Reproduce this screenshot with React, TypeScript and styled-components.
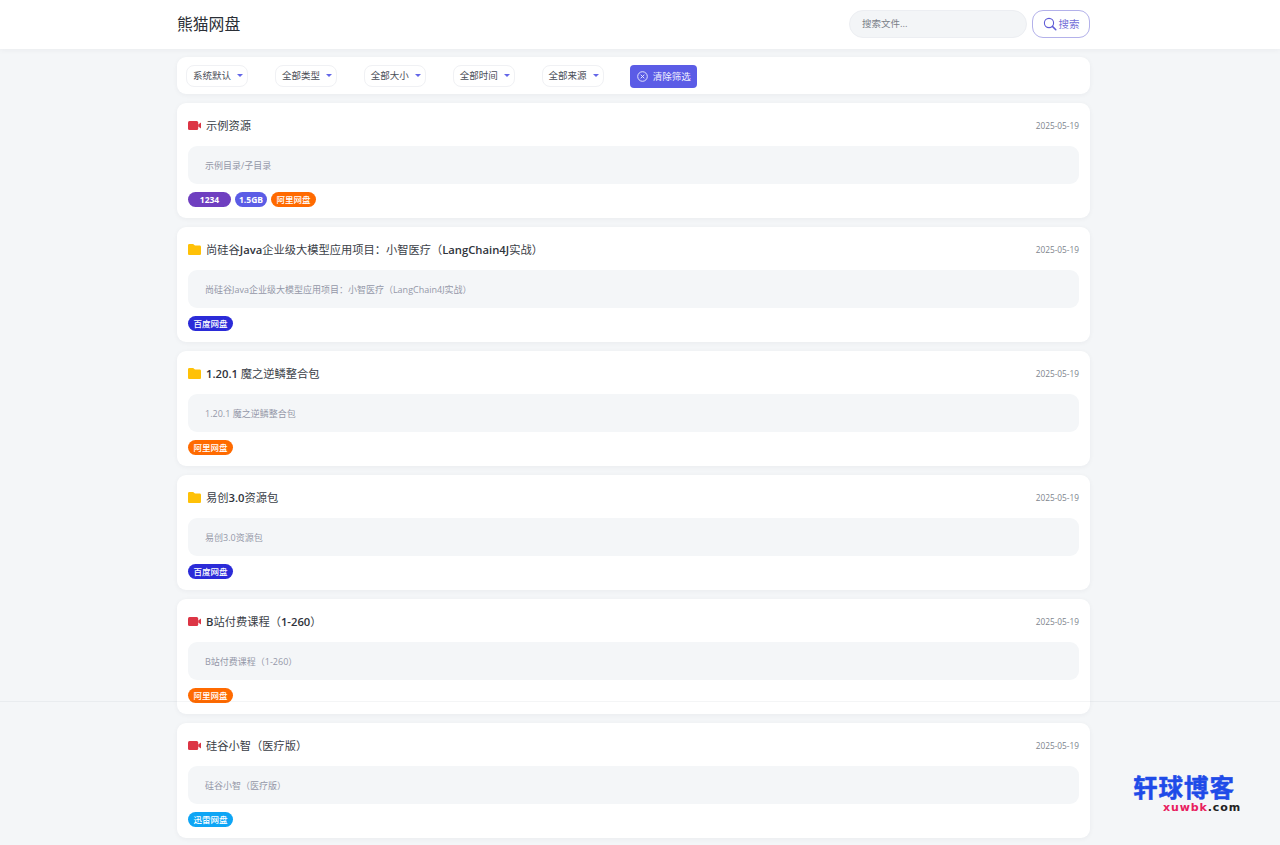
import { createGlobalStyle, styled } from "styled-components";

const FONT = `"Open Sans", "Noto Sans CJK SC", sans-serif`;

const GlobalStyle = createGlobalStyle`
    html, body {
        margin: 0;
        padding: 0;
        background: #f4f6f8;
        font-family: ${FONT};
        overflow: hidden;
    }
    * { box-sizing: border-box; }
`;

const Page = styled.div`
    position: relative;
    height: 845px;
    overflow: hidden;
`;

// the page keeps room for a hidden scrollbar, so everything centres a bit left
const Header = styled.header`
    height: 49px;
    background: #fff;
    box-shadow: 0 1px 6px rgba(30, 40, 60, 0.05);
    padding: 0 13px 2px 0;
    display: flex;
    justify-content: center;
`;

const HeaderInner = styled.div`
    width: 913px;
    display: flex;
    align-items: center;
    justify-content: space-between;
`;

const Logo = styled.div`
    font-size: 15.8px;
    font-weight: 400;
    color: #2b2f36;
`;

const SearchRow = styled.div`
    display: flex;
    align-items: center;
    gap: 5px;
`;

const SearchInput = styled.div`
    width: 178px;
    height: 28px;
    border-radius: 14px;
    background: #f3f5f7;
    border: 1px solid #eceef2;
    padding: 0 0 1px 12px;
    display: flex;
    align-items: center;
    font-size: 9.5px;
    color: #7a7f88;
`;

const SearchButton = styled.div`
    width: 58px;
    height: 28px;
    border-radius: 11px;
    border: 1px solid #b3b1ea;
    background: #fff;
    color: #7470d8;
    font-size: 10.5px;
    display: flex;
    align-items: center;
    justify-content: center;
    gap: 2px;
`;

const Content = styled.div`
    padding-right: 13px;
`;

const Main = styled.main`
    width: 913px;
    margin: 8px auto 0;
    display: flex;
    flex-direction: column;
    gap: 9px;
`;

const FilterBar = styled.div`
    height: 37px;
    background: #fff;
    border-radius: 9px;
    box-shadow: 0 1px 5px rgba(30, 40, 60, 0.05);
    padding: 0 9px;
    display: flex;
    align-items: center;
    gap: 26.5px;
`;

const Select = styled.div`
    width: 62.4px;
    height: 22px;
    border-radius: 8px;
    border: 1px solid #f0f1f4;
    padding: 0 0 1px 6px;
    display: flex;
    align-items: center;
    gap: 6px;
    font-size: 9.5px;
    color: #4a4e57;
    background: #fff;
`;

const Caret = styled.span`
    width: 0;
    height: 0;
    margin-top: 1px;
    border-left: 3px solid transparent;
    border-right: 3px solid transparent;
    border-top: 3px solid #6366e8;
`;

const ClearButton = styled.div`
    width: 66.5px;
    height: 23px;
    margin-top: 1px;
    border-radius: 4px;
    background: #5b5ce6;
    color: #f1f1ff;
    font-size: 9.5px;
    display: flex;
    align-items: center;
    justify-content: center;
    gap: 5px;
`;

const Card = styled.article`
    height: 115px;
    background: #fff;
    border-radius: 9px;
    box-shadow: 0 1px 5px rgba(30, 40, 60, 0.05);
    padding: 11px 11px 0;
    display: flex;
    flex-direction: column;
`;

const CardHead = styled.div`
    height: 22px;
    display: flex;
    align-items: center;
    justify-content: space-between;
`;

const TitleWrap = styled.div`
    display: flex;
    align-items: center;
    gap: 5px;
`;

const Title = styled.div`
    font-size: 11.25px;
    color: #3a3e47;
    b {
        font-weight: 600;
        color: #2f333b;
    }
`;

const DateText = styled.div`
    font-size: 8.3px;
    color: #80858e;
`;

const PathBox = styled.div`
    margin-top: 10px;
    height: 38px;
    border-radius: 9px;
    background: #f4f6f8;
    padding-left: 17px;
    display: flex;
    align-items: center;
    font-size: 9px;
    color: #9498a8;
`;

const Tags = styled.div`
    margin-top: 8px;
    display: flex;
    gap: 4px;
`;

const Tag = styled.span<{ $bg: string; $w: number; $bold?: boolean }>`
    width: ${(p) => p.$w}px;
    height: 15px;
    padding-bottom: 1px;
    border-radius: 7.5px;
    background: ${(p) => p.$bg};
    color: #fff;
    font-size: 8.5px;
    font-weight: ${(p) => (p.$bold ? 700 : 500)};
    display: flex;
    align-items: center;
    justify-content: center;
`;

const FooterLine = styled.div`
    position: absolute;
    left: 0;
    right: 0;
    top: 701px;
    height: 1px;
    background: rgba(40, 50, 70, 0.05);
`;

const Watermark = styled.svg`
    position: absolute;
    left: 1130px;
    top: 770px;
`;

function BlogMark() {
    return (
        <Watermark width="116" height="46" viewBox="0 0 116 46">
            <text
                x="3"
                y="27"
                fontFamily={`"Noto Sans CJK SC", sans-serif`}
                fontSize="24.5"
                fontWeight="700"
                letterSpacing="1"
                fill="#1f4be8"
                stroke="#1f4be8"
                strokeWidth="0.5"
                strokeLinejoin="round"
            >
                轩球博客
            </text>
            <text
                x="33"
                y="41"
                fontFamily={`"DejaVu Sans", sans-serif`}
                fontSize="11"
                fontWeight="700"
                letterSpacing="0.9"
                fill="#222"
            >
                <tspan fill="#e8215f">xuwbk</tspan>.com
            </text>
        </Watermark>
    );
}

function VideoIcon() {
    return (
        <svg width="13" height="9" viewBox="0 0 13 9">
            <rect x="0" y="0" width="10.2" height="9" rx="1.5" fill="#dc3545" />
            <path d="M10.2 3.4 13 1.6v5.8L10.2 5.6z" fill="#dc3545" />
        </svg>
    );
}

function FolderIcon() {
    return (
        <svg width="13" height="11" viewBox="0 0 13 11">
            <path
                d="M1.3 0h3.4c.4 0 .7.1 1 .4L7 1.6h4.7c.7 0 1.3.6 1.3 1.3v6.8c0 .7-.6 1.3-1.3 1.3H1.3C.6 11 0 10.4 0 9.7V1.3C0 .6.6 0 1.3 0z"
                fill="#ffc107"
            />
        </svg>
    );
}

function SearchIcon() {
    return (
        <svg width="14" height="14" viewBox="0 0 14 14" fill="none" stroke="#5f5bd6" strokeWidth="1.1">
            <circle cx="6" cy="6" r="4.6" />
            <path d="M9.4 9.4 12.8 12.8" strokeLinecap="round" strokeWidth="1.5" />
        </svg>
    );
}

function ClearIcon() {
    return (
        <svg width="11" height="11" viewBox="0 0 11 11" fill="none" stroke="#f1f1ff" strokeWidth="0.9">
            <circle cx="5.5" cy="5.5" r="4.8" />
            <path d="M3.7 3.7 7.3 7.3M7.3 3.7 3.7 7.3" />
        </svg>
    );
}

const BAIDU = "#2b2bd8";
const ALI = "#ff6a00";
const XUNLEI = "#0ea5f5";

type Item = {
    icon: "video" | "folder";
    title: React.ReactNode;
    path: string;
    tags: { label: string; bg: string; w: number; bold?: boolean }[];
};

const items: Item[] = [
    {
        icon: "video",
        title: "示例资源",
        path: "示例目录/子目录",
        tags: [
            { label: "1234", bg: "#6f3fc0", w: 43, bold: true },
            { label: "1.5GB", bg: "#5b5ce6", w: 32, bold: true },
            { label: "阿里网盘", bg: ALI, w: 45 },
        ],
    },
    {
        icon: "folder",
        title: (
            <>
                尚硅谷<b>Java</b>企业级大模型应用项目：小智医疗（<b>LangChain4J</b>实战）
            </>
        ),
        path: "尚硅谷Java企业级大模型应用项目：小智医疗（LangChain4J实战）",
        tags: [{ label: "百度网盘", bg: BAIDU, w: 45 }],
    },
    {
        icon: "folder",
        title: (
            <>
                <b>1.20.1</b> 魔之逆鳞整合包
            </>
        ),
        path: "1.20.1 魔之逆鳞整合包",
        tags: [{ label: "阿里网盘", bg: ALI, w: 45 }],
    },
    {
        icon: "folder",
        title: (
            <>
                易创<b>3.0</b>资源包
            </>
        ),
        path: "易创3.0资源包",
        tags: [{ label: "百度网盘", bg: BAIDU, w: 45 }],
    },
    {
        icon: "video",
        title: (
            <>
                <b>B</b>站付费课程（<b>1-260</b>）
            </>
        ),
        path: "B站付费课程（1-260）",
        tags: [{ label: "阿里网盘", bg: ALI, w: 45 }],
    },
    {
        icon: "video",
        title: "硅谷小智（医疗版）",
        path: "硅谷小智（医疗版）",
        tags: [{ label: "迅雷网盘", bg: XUNLEI, w: 45 }],
    },
];

const filters = ["系统默认", "全部类型", "全部大小", "全部时间", "全部来源"];

export default function App() {
    return (
        <Page>
            <GlobalStyle />
            <Header>
                <HeaderInner>
                    <Logo>熊猫网盘</Logo>
                    <SearchRow>
                        <SearchInput>搜索文件...</SearchInput>
                        <SearchButton>
                            <SearchIcon />
                            搜索
                        </SearchButton>
                    </SearchRow>
                </HeaderInner>
            </Header>
            <Content>
                <Main>
                    <FilterBar>
                        {filters.map((f) => (
                            <Select key={f}>
                                {f}
                                <Caret />
                            </Select>
                        ))}
                        <ClearButton>
                            <ClearIcon />
                            清除筛选
                        </ClearButton>
                    </FilterBar>
                    {items.map((item) => (
                        <Card key={item.path}>
                            <CardHead>
                                <TitleWrap>
                                    {item.icon === "video" ? <VideoIcon /> : <FolderIcon />}
                                    <Title>{item.title}</Title>
                                </TitleWrap>
                                <DateText>2025-05-19</DateText>
                            </CardHead>
                            <PathBox>{item.path}</PathBox>
                            <Tags>
                                {item.tags.map((t) => (
                                    <Tag key={t.label} $bg={t.bg} $w={t.w} $bold={t.bold}>
                                        {t.label}
                                    </Tag>
                                ))}
                            </Tags>
                        </Card>
                    ))}
                </Main>
            </Content>
            <FooterLine />
            <BlogMark />
        </Page>
    );
}
